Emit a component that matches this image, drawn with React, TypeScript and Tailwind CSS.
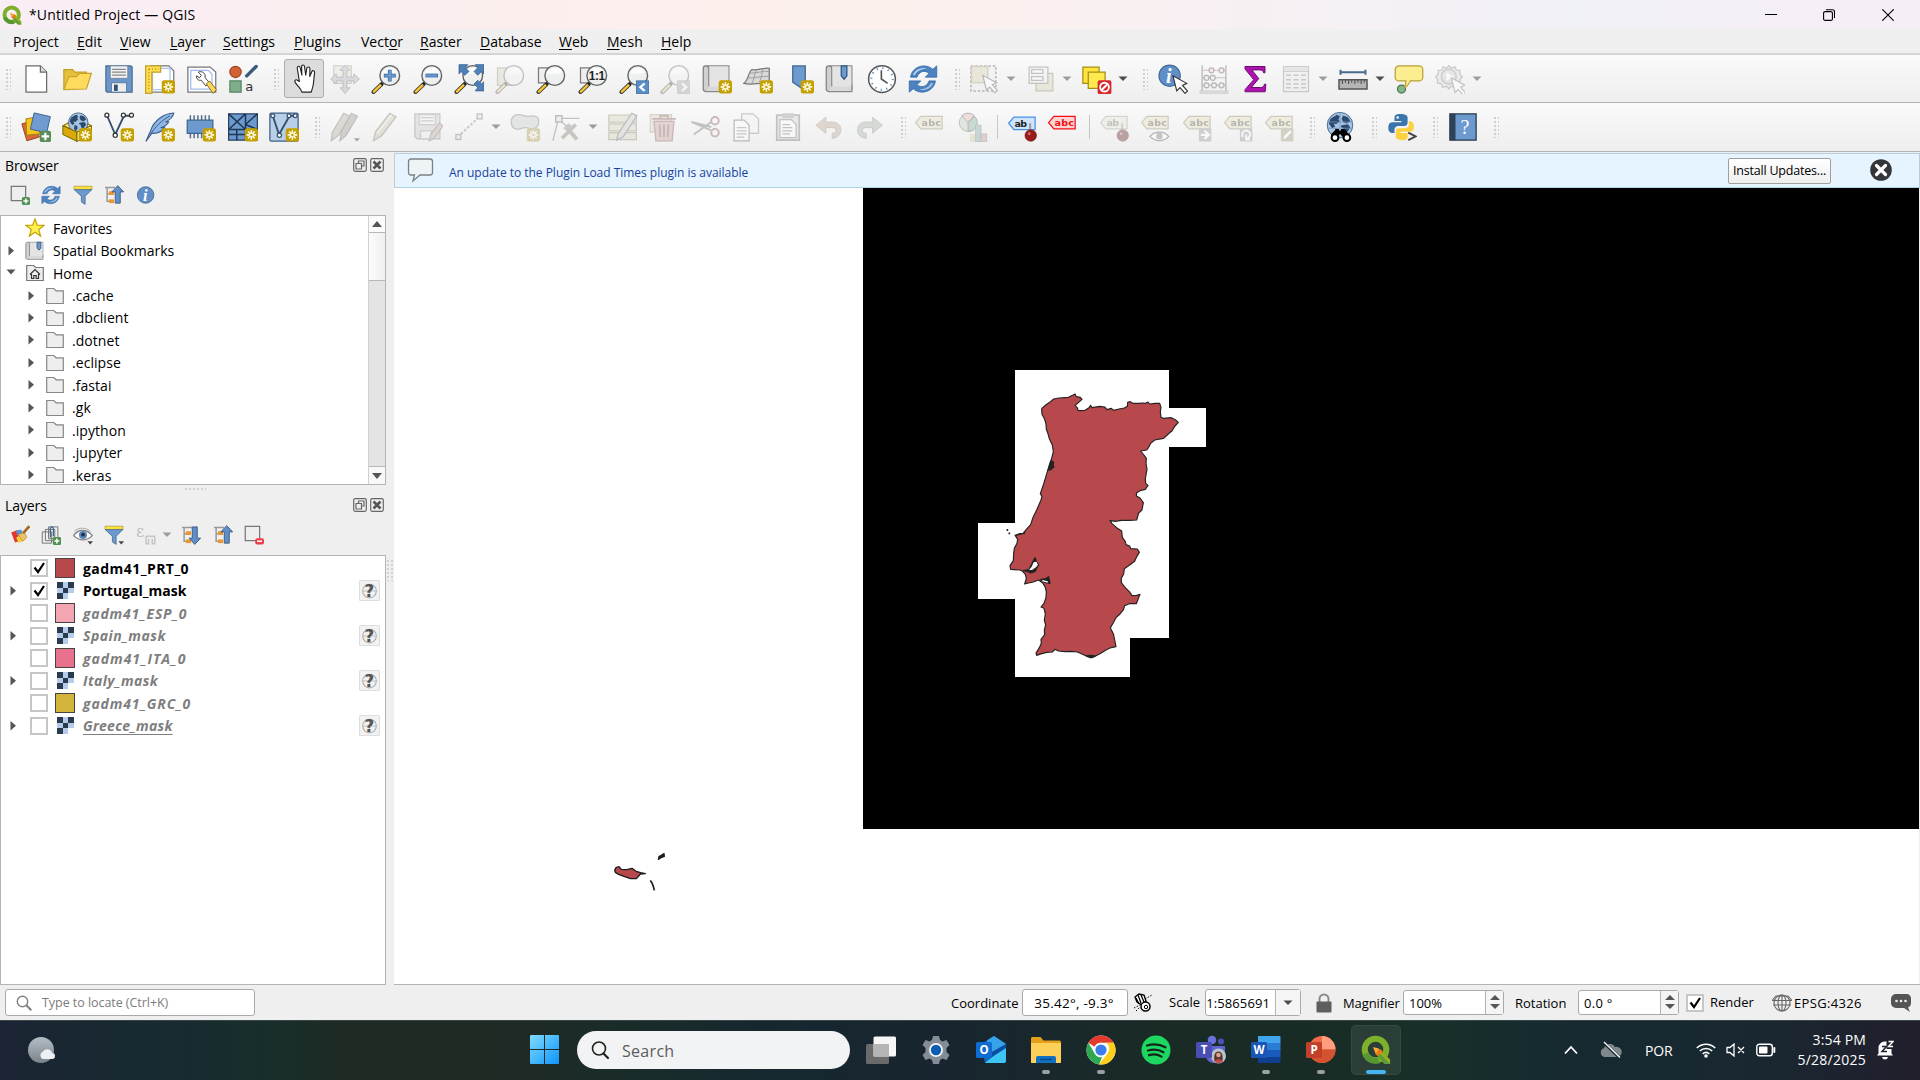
import React from "react";

type P = { children?: React.ReactNode; className?: string };

/* ---------- icon primitives ---------- */

function Ico({ children, className = "" }: P) {
  return (
    <svg viewBox="0 0 24 24" className={`size-[30px] shrink-0 ${className}`} fill="none">
      {children}
    </svg>
  );
}

function Sm({ children, className = "" }: P) {
  return (
    <svg viewBox="0 0 16 16" className={`size-5 shrink-0 ${className}`} fill="none">
      {children}
    </svg>
  );
}

const NewBadge = ({ x = 13.4, y = 13 }: { x?: number; y?: number }) => (
  <g transform={`translate(${x} ${y})`}>
    <rect width="10.6" height="10.6" rx="2" fill="#c4a000" />
    <path d="M5.3 1.5v7.6M1.500 5.3h7.6M2.600 2.600l5.400 5.400M8 2.600L2.600 8" stroke="#fffbe6" strokeWidth="1.3" />
    <circle cx="5.3" cy="5.3" r="1" fill="#c4a000" />
  </g>
);

function Grip({ className = "" }: P) {
  return (
    <div
      className={`h-[22px] w-[6px] shrink-0 bg-[radial-gradient(circle,#c2c2c2_0.6px,transparent_1px)] bg-[length:4px_4px] ${className}`}
    />
  );
}

function Drop({ className = "", dark = false }: { className?: string; dark?: boolean }) {
  return (
    <svg viewBox="0 0 10 6" className={`h-[6px] w-[10px] shrink-0 ${className}`}>
      <path d="M.5.5h9L5 5z" fill={dark ? "#4d4d4d" : "#9d9d9d"} />
    </svg>
  );
}

function Lens({ children }: { children?: React.ReactNode }) {
  return (
    <>
      <path d="M2 22.4l6.4-6.2" stroke="#3c3c3c" strokeWidth="3.2" strokeLinecap="round" />
      <path d="M2.3 22.1l5.4-5.2" stroke="#fcc62f" strokeWidth="1.8" strokeLinecap="round" />
      <path d="M8 16.4l2.4-2.4" stroke="#222" strokeWidth="2.2" />
      <circle cx="15" cy="9.2" r="7.9" fill="#eef0f0" stroke="#5f6364" strokeWidth="1.1" />
      <path d="M9 8a6.4 6.4 0 0 1 12-1.500c-3 2-8 1-12 1.500z" fill="#fff" opacity=".8" />
      {children}
    </>
  );
}

const Tag = ({ fill = "#e9e4c8", stroke = "#a8a48e", color = "#77746a", text = "abc" }) => (
  <>
    <path d="M1.300 10L5.500 5h17v10h-17z" fill={fill} stroke={stroke} strokeWidth="1" />
    <text x="6" y="12.900" fontFamily="DejaVu Sans" fontWeight="700" fontSize="7.600" fill={color} textLength={text === "abc" ? 15.500 : 10}>
      {text}
    </text>
  </>
);

const RefreshArt = () => (
  <>
    <path d="M2 10.500C3 4.500 8 1.500 12.500 1.500c3 0 5.500 1 7.300 2.700L23 1.500v9h-9.200l3-3c-3-2.800-8-2-9.600 3z" fill="#4b82bf" stroke="#2d64a6" strokeWidth=".6" />
    <path d="M22 13.500c-1 6-6 9-10.500 9-3 0-5.500-1-7.300-2.700L1 22.500v-9h9.200l-3 3c3 2.800 8 2 9.600-3z" fill="#4b82bf" stroke="#2d64a6" strokeWidth=".6" />
    <path d="M4 8.500C6 4 11 2.500 15 3.500 10 4 6.500 6 5.500 9z" fill="#b6d1ec" />
    <path d="M20 15.500c-2 4.500-7 6-11 5 5-.5 8.500-2.500 9.500-5.500z" fill="#a3c4e6" />
  </>
);

const Globe = ({ cx = 12, cy = 9, r = 8 }) => (
  <g>
    <circle cx={cx} cy={cy} r={r} fill="#a8c4e2" stroke="#3c5f86" strokeWidth=".7" />
    <g transform={`translate(${cx - r} ${cy - r}) scale(${r / 8})`} fill="#2b4a70">
      <path d="M2 4l4-2.500 2 1-1 2 1 1-2.500 2L4 7l1 2-2 1-2-3zM10 2l3 1 1.500 2.500L12 7l-2-1-1-2zM9 8l4-.500 1.500 2L12 13l-1.500-1L10 10l-1.500-1zM5 10l2 .5.5 2L6 15l-1.500-2z" />
    </g>
  </g>
);

const Cursor = ({ x = 12, y = 9, stroke = "#333" }) => (
  <path
    transform={`translate(${x} ${y})`}
    d="M0 0l3 12 2.600-2.600 4 4.600 2-1.800-4-4.600L11 6z"
    fill="#fff"
    stroke={stroke}
    strokeWidth=".9"
  />
);

const Scroll = () => (
  <>
    <path d="M4 1.500h17.500V20H5V5z" fill="#e2e2e2" stroke="#8a8a8a" />
    <path d="M1 3.500C1 2 2 1.500 3 1.500s2.500.5 2.500 2.500v16c0 1.500-.8 2-2 2s-2.500-.5-2.500-2z" fill="#d0d0d0" stroke="#808080" />
    <path d="M5.500 17H21.500v5H3.500" fill="#d9d9d9" stroke="#8a8a8a" />
    <path d="M6 2h15v16H6z" fill="#e4e4e4" />
  </>
);

const MagBadge = ({ next = false }) => (
  <>
    <rect x="14" y="13.500" width="10" height="10" fill={next ? "#9aa0a5" : "#5c8fc8"} stroke={next ? "#888" : "#3d6ea3"} strokeWidth=".7" />
    <path d={next ? "M17.500 15.500l3.500 3-3.500 3" : "M20.500 15.500l-3.500 3 3.500 3"} stroke="#fff" strokeWidth="1.700" />
  </>
);

const Needle = () => (
  <>
    <path d="M18.500 9v8" stroke="#999" strokeWidth="1.600" />
    <circle cx="19" cy="18.800" r="4.600" fill="#9b1b1b" stroke="#6f1111" strokeWidth=".5" />
    <circle cx="17.800" cy="17.300" r="1.100" fill="#d07474" />
  </>
);

const faded = "opacity-35 saturate-50";

function QgisMark({ className = "" }: P) {
  return (
    <svg viewBox="0 0 32 32" className={className} fill="none">
      <circle cx="15.500" cy="15.500" r="11.500" stroke="#7eb02c" strokeWidth="6.500" />
      <path d="M4.500 20A12 12 0 0 0 19 27" stroke="#589632" strokeWidth="6.500" />
      <path d="M16 15l4.500 1L31 26v5h-6L16.500 20.500z" fill="#93b023" />
      <path d="M19 19l12 12h-6l-7-8.500z" fill="#5b9a35" />
      <path d="M13 13l8 2.500 2 2-5 5-2.500-2z" fill="#ee7913" />
      <path d="M13 13l6 1.500-3 5z" fill="#f5b041" />
    </svg>
  );
}

/* ---------- title and menu ---------- */

function TitleBar() {
  return (
    <header className="flex h-[29px] items-center bg-[linear-gradient(90deg,#f9eef6_0%,#fbeeee_24%,#fcf0ec_45%,#f8f0f2_62%,#f1f1f8_82%,#f6eef6_95%)] pl-[2px]">
      <QgisMark className="size-[20px]" />
      <span className="ml-[7px] text-[14px] tracking-[0.13px]">*Untitled Project — QGIS</span>
      <div className="ml-auto flex items-center pr-[26px]">
        <svg viewBox="0 0 12 12" className="size-3"><path d="M0 5.500h12" stroke="#000" /></svg>
        <svg viewBox="0 0 12 12" className="ml-[46px] size-3" fill="none">
          <rect x=".6" y="2.600" width="8.800" height="8.800" rx="1.500" stroke="#000" strokeWidth="1.100" />
          <path d="M3 .7h6.500a2 2 0 0 1 2 2V9" stroke="#000" strokeWidth="1.100" />
        </svg>
        <svg viewBox="0 0 12 12" className="ml-[47px] size-3"><path d="M.3.3l11.400 11.400M11.700.3L.3 11.700" stroke="#000" strokeWidth="1.100" /></svg>
      </div>
    </header>
  );
}

const menus: [string, string, string, string][] = [
  ["Pro", "j", "ect", "w-[64px]"],
  ["", "E", "dit", "w-[43px]"],
  ["", "V", "iew", "w-[50px]"],
  ["", "L", "ayer", "w-[53px]"],
  ["", "S", "ettings", "w-[71px]"],
  ["", "P", "lugins", "w-[67px]"],
  ["Vect", "o", "r", "w-[59px]"],
  ["", "R", "aster", "w-[60px]"],
  ["", "D", "atabase", "w-[79px]"],
  ["", "W", "eb", "w-[48px]"],
  ["", "M", "esh", "w-[54px]"],
  ["", "H", "elp", "w-[50px]"],
];

function MenuBar() {
  return (
    <nav className="flex h-[26px] items-center border-b-2 border-[#d4d4d4] bg-[#efefef] pl-[13px] text-[14px]">
      {menus.map(([a, u, b, w]) => (
        <span key={a + u + b} className={`shrink-0 whitespace-pre ${w}`}>
          {a}
          <span className="underline underline-offset-2">{u}</span>
          {b}
        </span>
      ))}
    </nav>
  );
}

/* ---------- toolbars ---------- */

const bar = "flex h-12 items-center border-b border-[#b4b4b4] bg-gradient-to-b from-[#fafafa] to-[#eeeeee] pl-[5px]";

function TopToolbar() {
  return (
    <div className={bar}>
      <Grip />
      <div className="ml-[10px] flex w-[237px] justify-between">
        <Ico><path d="M4 1.500h11.500l5 5v16H4z" fill="#fff" stroke="#6b6b6b" /><path d="M15.500 1.500v5h5" fill="#ddd" stroke="#6b6b6b" /></Ico>
        <Ico>
          <path d="M1.500 20.500V4.500h7l1.500 2h9.500v4" fill="#e6c13c" stroke="#c49f25" />
          <path d="M1.500 20.500l4-10.500h6l2.500-2.500h9.500l-4 12.500z" fill="#fcdb5e" stroke="#c9a42b" />
        </Ico>
        <Ico>
          <path d="M1.500 1.500h20l1 1v20h-20l-1-1z" fill="#6b96c7" stroke="#4a6d94" />
          <path d="M5 1.500h14v10H5z" fill="#f1f1f1" stroke="#5d7896" strokeWidth=".6" />
          <path d="M6.500 4.200h11M6.500 6.500h11M6.500 8.800h11" stroke="#888" />
          <path d="M6 15h12v7.500H6z" fill="#eee" stroke="#4a6d94" strokeWidth=".6" />
          <path d="M8 16.500h3v5H8z" fill="#35506e" />
        </Ico>
        <Ico>
          <path d="M4.500 1.500h14.500l4 4v17h-18.500z" fill="#fff" stroke="#777" />
          <path d="M6 3.500h14v17H6z" stroke="#a9c5f1" />
          <path d="M.5 1.500h12v5h-7v17h-5z" fill="#ffdd4f" stroke="#c4a12b" />
          <path d="M3 4v18M3 4h8" stroke="#b28f1c" strokeDasharray="1 1.500" />
          <NewBadge />
        </Ico>
        <Ico>
          <path d="M.7 2.500h17.800l4.500 4v16H.7z" fill="#fff" stroke="#777" />
          <path d="M3 5h14l3 3v12H3z" stroke="#9ebdf0" />
          <path d="M9 6.500c2-1 5 0 5.500 2.500l0 2 3.500 4-3 2.500-3.500-4.500c-2.500.5-4-1-4-3.500l2.500 1.500 1.500-2z" fill="#fff" stroke="#444" strokeWidth=".8" />
          <path d="M15.500 16l2.500-2.500 5.500 7-2.500 3z" fill="#fbd95c" stroke="#866b1d" strokeWidth=".8" />
        </Ico>
        <Ico>
          <circle cx="6" cy="6.300" r="4.500" fill="#d36136" stroke="#a5421c" />
          <path d="M15 9.500L22.500 2" stroke="#3d5a7d" strokeWidth="2.800" strokeLinecap="round" />
          <rect x="1.500" y="13.500" width="9" height="9" fill="#7fae8a" stroke="#598667" />
          <text x="13.800" y="21.600" fontFamily="DejaVu Sans" fontSize="10.500" fill="#333">a</text>
        </Ico>
      </div>
      <Grip className="ml-[15px]" />
      <div className="ml-[5px] flex h-[39px] w-[40px] items-center justify-center rounded-[3px] border border-[#adadad] bg-[#dcdcdc]">
        <Ico>
          <path d="M7.500 14L5.800 3.200c-.2-1.600 2-1.900 2.300-.4L9.500 9 9.300 2c0-1.600 2.200-1.600 2.300 0l1 7 .8-5.500c.2-1.500 2.500-1.400 2.500.2L15.800 10l1.700-4c.5-1.200 2.300-.7 2.200.7l-1 9.100c-.3 3-1.200 4.500-1.700 6.700H9.500c-.5-3-3-4-5.500-8-.7-1.500 1-2.400 2-1.500z" fill="#fff" stroke="#222" strokeWidth=".9" strokeLinejoin="round" transform="translate(.8 0)" />
        </Ico>
      </div>
      <div className="ml-[6px] flex w-[608px] justify-between">
        <Ico className="opacity-40 saturate-50">
          <path d="M3 1.500h14v14H3z" fill="#ebe3c4" stroke="#a49c7f" />
          <path d="M12 1l4 4h-2.500v5.500H19V8l4.500 4-4.500 4v-2.500h-5.500V19H16l-4 4.500L8 19h2.500v-5.500H5V16L.5 12 5 8v2.500h5.500V5H8z" fill="#aeb6bd" stroke="#6d757c" strokeWidth=".8" />
        </Ico>
        <Ico><Lens><path d="M15 4.500v9.500M10.300 9.200h9.500" stroke="#34659c" strokeWidth="3" /><path d="M15 5v8.500M10.800 9.200h8.500" stroke="#6b9bd2" strokeWidth="1.800" /></Lens></Ico>
        <Ico><Lens><path d="M10 9.200h10" stroke="#34659c" strokeWidth="3" /><path d="M10.500 9.200h9" stroke="#6b9bd2" strokeWidth="1.800" /></Lens></Ico>
        <Ico>
          <Lens />
          <path d="M4 .5h7L9 3l3 3-3.500 3-3-3L4 8zM24 .5h-7L19 3l-3 3 3 3 3-3L24 8zM24 21.500h-7L19 19l-3-3 3-3 3 3 2-2z" fill="#4e81b8" stroke="#345e8c" strokeWidth=".6" />
        </Ico>
        <Ico className={faded}><path d="M2 3h14v14H2z" fill="#d9d2a8" stroke="#8d8769" /><Lens /></Ico>
        <Ico><path d="M2 3h12v12H2z" fill="#efefef" stroke="#7b7b7b" /><Lens /></Ico>
        <Ico>
          <path d="M2 3h12v12H2z" fill="#efefef" stroke="#7b7b7b" />
          <Lens><text x="8.600" y="12.600" fontFamily="Liberation Sans" fontWeight="700" fontSize="9.500" fill="#222" textLength="13">1:1</text></Lens>
        </Ico>
        <Ico><Lens /><MagBadge /></Ico>
        <Ico className={faded}><Lens /><MagBadge next /></Ico>
        <Ico><Scroll /><NewBadge /></Ico>
        <Ico>
          <path d="M.7 15.500C4 14 4 7 7 4.500c4 1 11-2 14-1v13c-6-3-12 1-20.300-1z" fill="#d9d9d9" stroke="#777" />
          <path d="M3 11c6 1 12-2 18-1M5 7c5 1 11-2 16-1M11 4c-2 4-2 8-4 12M16 3.500c-1 4-1 8-3 11" stroke="#999" strokeWidth=".7" />
          <NewBadge />
        </Ico>
        <Ico><path d="M7 1.500h10v20l-5-3.500-5-3.500z" fill="#6d9ace" stroke="#3f658f" /><NewBadge /></Ico>
        <Ico><Scroll /><path d="M13 1.500h4.500v8l-2.200 2.700-2.300-2.700z" fill="#6d9ace" stroke="#2c5482" /></Ico>
        <Ico>
          <circle cx="12" cy="12" r="10.700" fill="#fff" stroke="#555" strokeWidth="1.200" />
          <circle cx="12" cy="12" r="8.600" stroke="#5b8fcb" strokeWidth="1.600" strokeDasharray="1 3.500" />
          <path d="M11.500 5v7l5 3.500" stroke="#555" strokeWidth="1.300" />
        </Ico>
        <Ico><RefreshArt /></Ico>
      </div>
      <Grip className="ml-[16px]" />
      <Ico className="ml-[9px] opacity-50">
        <rect x="1.500" y="1.500" width="20" height="20" fill="#f0f0f0" stroke="#777" strokeWidth="1.200" strokeDasharray="2 1.500" />
        <rect x="2" y="2" width="13" height="13" fill="#dfd9bf" stroke="#b2ac92" />
        <Cursor x={11} y={9} stroke="#777" />
      </Ico>
      <Drop className="ml-[7px]" />
      <Ico className="ml-[10px] opacity-45">
        <path d="M8 7.500h13.500v14H8z" fill="#ddd8c0" stroke="#9c9780" />
        <path d="M2.500 2.500h15v13h-15z" fill="#f0f0f0" stroke="#888" />
        <path d="M4.500 4.500h9v3h-9zM4.500 10h9v3h-9z" fill="#fff" stroke="#888" />
      </Ico>
      <Drop className="ml-[6px]" />
      <Ico className="ml-[10px]">
        <path d="M.7 2.500h13v13H.7z" fill="#ffe33e" stroke="#a58f13" />
        <path d="M5 6.500h13.500v13H5z" fill="#ffe94f" stroke="#a58f13" />
        <rect x="12.500" y="13" width="11" height="11" rx="1.500" fill="#d9272b" />
        <circle cx="18" cy="18.500" r="3.500" stroke="#fff" strokeWidth="1.500" /><path d="M15.500 21l5-5" stroke="#fff" strokeWidth="1.500" />
      </Ico>
      <Drop dark className="ml-[6px]" />
      <Grip className="ml-[14px]" />
      <Ico className="ml-[10px]">
        <circle cx="9.300" cy="9.300" r="8.500" fill="#5f8fc6" stroke="#436b99" />
        <text x="6.300" y="15" fontFamily="Liberation Serif" fontStyle="italic" fontWeight="700" fontSize="16" fill="#fff">i</text>
        <Cursor x={12} y={9.500} />
      </Ico>
      <Ico className="ml-[11px] opacity-50">
        <path d="M2.500 1v21M21.500 1v21" stroke="#777" /><path d="M.7 21.500h22.600v2H.7z" fill="#ccc" stroke="#999" strokeWidth=".5" />
        <path d="M2.500 5h19M2.500 11h19M2.500 17h19" stroke="#888" strokeWidth=".7" />
        <g stroke="#8c7272" fill="#eee0e0"><circle cx="10" cy="5" r="2" /><circle cx="18" cy="5" r="2" /></g>
        <g stroke="#777" fill="#eee"><circle cx="6" cy="11" r="2" /><circle cx="11" cy="11" r="2" /><circle cx="6" cy="17" r="2" /><circle cx="12" cy="17" r="2" /><circle cx="18" cy="17" r="2" /></g>
      </Ico>
      <Ico className="ml-[11px]"><path d="M4 2h16v5h-1.200c-.3-1.700-1-2.300-3-2.300H9.500l5.500 7L9 18.800h7.500c2 0 2.600-.8 3-2.600h1.200l-.6 6H4v-1.700l7-8-7-8.500z" fill="#b012b0" stroke="#6c0d73" strokeWidth=".8" /></Ico>
      <Ico className="ml-[11px] opacity-40">
        <path d="M2 2h20v20H2z" fill="#e8ebee" stroke="#888" /><path d="M2 2h20v4H2z" fill="#c9cdd0" stroke="#888" strokeWidth=".6" />
        <path d="M4 9h4M10 9h4M16 9h4M4 12.500h4M10 12.500h4M16 12.500h4M4 16h4M10 16h4M16 16h4M4 19h4M10 19h4M16 19h4" stroke="#888" strokeWidth="1.200" />
      </Ico>
      <Drop className="ml-[7px]" />
      <Ico className="ml-[10px]">
        <path d="M2 6.500h20M2 4.500v4M22 4.500v4" stroke="#4a6a8c" strokeWidth="1.600" />
        <path d="M.8 12.500h22.400v7.500H.8z" fill="#b5b5b5" stroke="#555" strokeWidth="1.200" />
        <path d="M3.500 13v3M6 13v2M8.500 13v3M11 13v2M13.500 13v3M16 13v2M18.500 13v3M21 13v2" stroke="#444" strokeWidth=".8" />
      </Ico>
      <Drop dark className="ml-[7px]" />
      <Ico className="ml-[9px]">
        <circle cx="6" cy="20" r="3.200" fill="#82b78c" stroke="#4b7355" />
        <path d="M4 1.500h16a3 3 0 0 1 3 3v6a3 3 0 0 1-3 3h-7c-1 2.500-2.500 4.500-5.500 6 1.500-2 2-4 2-6H4a3 3 0 0 1-3-3v-6a3 3 0 0 1 3-3z" fill="#fbee8e" stroke="#b8a036" />
      </Ico>
      <Ico className="ml-[11px] opacity-40">
        <path d="M10 1l2 2 3-1 1 2.500 3 .5v3l2 2-2 2v3l-3 .5-1 3-3-1-2 2-2-2-3 1-1-3-3-.5v-3L-.5 10l2-2V5l3-.5 1-2.500 3 1z" transform="translate(1 .3)" fill="#ddd" stroke="#888" />
        <circle cx="11" cy="10" r="6" fill="#c9ced3" stroke="#888" /><path d="M9 6.500l6 3.500-6 3.500z" fill="#fff" />
        <Cursor x={13} y={11} stroke="#777" />
      </Ico>
      <Drop className="ml-[7px]" />
    </div>
  );
}

function EditToolbar() {
  return (
    <div className="flex h-[49px] items-center border-b border-[#b4b4b4] bg-gradient-to-b from-[#fafafa] to-[#eeeeee] pl-[5px]">
      <Grip />
      <div className="ml-[10px] flex w-[278px] justify-between">
        <Ico>
          <path d="M.7 9.500l10-3 4 13.500-10 3z" fill="#d5683b" stroke="#9f4418" strokeWidth=".8" />
          <path d="M4 5.500l11-2v14l-10.500 1z" fill="#f4c61a" stroke="#a5820c" strokeWidth=".8" />
          <path d="M10.500.7l13 3-3 13-13-3z" fill="#6f9bd0" stroke="#3e6592" strokeWidth=".8" />
          <rect x="15" y="15" width="9" height="9" rx="1.500" fill="#5a8c5a" /><path d="M19.500 16.500v6M16.500 19.500h6" stroke="#fff" strokeWidth="1.700" />
        </Ico>
        <Ico>
          <path d="M1 11l5-3h12l5.500 3-11 5z" fill="#f7e46a" stroke="#8e7504" />
          <Globe cx={13} cy={8.500} r={7.800} />
          <path d="M.7 11l11.300 5v7.500L.7 18z" fill="#d9a90a" stroke="#7a6200" strokeWidth=".8" />
          <path d="M12 16l11.500-5v7L12 23.500z" fill="#fff38f" stroke="#7a6200" strokeWidth=".8" />
          <NewBadge />
        </Ico>
        <Ico>
          <path d="M2.500 3l6.500 15L16 3h5" stroke="#34506e" strokeWidth="1.500" />
          <g fill="#fff" stroke="#333" strokeWidth="1"><circle cx="2.300" cy="2.500" r="1.600" /><circle cx="9" cy="18.500" r="1.700" /><circle cx="15.500" cy="2.500" r="1.600" /><circle cx="22" cy="2.500" r="1.600" /></g>
          <NewBadge />
        </Ico>
        <Ico>
          <path d="M23 .8C15 1 7 7 4.500 15l-3.800 8.500L5.500 17c4.500.5 8-1.500 10-4.500h-3c3-.5 5-2 6.500-4.500h-2.500c3-1.500 6-4 6.500-7.200z" fill="#8fb6e4" stroke="#3a5f8c" strokeWidth=".9" />
          <path d="M20 3C13 7 8 12 4 18.500" stroke="#3a5f8c" strokeWidth=".8" />
          <NewBadge />
        </Ico>
        <Ico>
          <path d="M3.500 2.500v4M6.500 2.500v4M9.500 2.500v4M12.500 2.500v4M15.500 2.500v4M18.500 2.500v4M3.500 17v4M6.500 17v4M9.500 17v4M12.500 17v4" stroke="#52708f" strokeWidth="1.200" />
          <path d="M1 6.500h20.500v10.500H1z" fill="#6d9ace" stroke="#3f658f" /><NewBadge />
        </Ico>
        <Ico>
          <path d="M.5 1.500h23v21H.5z" fill="#6d9ace" stroke="#24405f" />
          <path d="M.5 14h23M14 1.500V22.500M.5 1.500l13.500 12.500M14 1.500L.5 14M14 10l9.500-8.500M14 10l9.500 4M.5 18h13.500M7 14v8.500" stroke="#1e3753" strokeWidth="1.200" />
          <NewBadge />
        </Ico>
        <Ico>
          <rect x=".7" y=".9" width="22.600" height="22.300" rx="1" fill="#b9cfe8" stroke="#3f5f82" />
          <path d="M3 3l5 15L16.500 3H21" stroke="#34506e" strokeWidth="1.500" />
          <g fill="#fff" stroke="#34506e"><circle cx="3" cy="3" r="1.500" /><circle cx="8.300" cy="18.500" r="1.700" /><circle cx="16" cy="3" r="1.500" /><circle cx="21" cy="3" r="1.500" /></g>
          <NewBadge />
        </Ico>
      </div>
      <Grip className="ml-[15px]" />
      <Ico className="ml-[10px] opacity-40">
        <path d="M1 23l1-7L11 1l5 2.500-9 15z" fill="#b9b2a6" stroke="#7d776c" /><path d="M8 23l1-7L17 1l5 2.500-9 15z" fill="#a39a93" stroke="#77706a" />
        <path d="M19 21h5l-2.500 2.500z" fill="#333" />
      </Ico>
      <Ico className="ml-[11px] opacity-40"><path d="M2 23l1.500-7L15 1l5 3-11.500 15z" fill="#cbc6ae" stroke="#7d7a6c" /><path d="M5 17L16.500 2.500" stroke="#f2f0e4" /></Ico>
      <Ico className="ml-[12px] opacity-35">
        <path d="M1.500 1.500h20v20h-18l-2-2z" fill="#c4c6c8" stroke="#777" /><path d="M5 2h13v8H5z" fill="#eee" stroke="#888" /><path d="M6.500 4.500h10M6.500 7h10" stroke="#888" /><path d="M6 15h9v6.500H6z" fill="#eee" stroke="#888" />
        <path d="M13 23l1-5 7-9 3 2-7 10z" fill="#b59f97" stroke="#77635c" />
      </Ico>
      <Ico className="ml-[11px] opacity-40">
        <path d="M3 20L20 4" stroke="#888" strokeWidth="1.500" strokeDasharray="2 1.500" /><rect x="1.500" y="18" width="4" height="4" fill="#ddd" stroke="#777" /><rect x="18.500" y="1.500" width="4" height="4" fill="#ddd" stroke="#777" />
      </Ico>
      <Drop className="ml-[7px]" />
      <Ico className="ml-[9px] opacity-40">
        <path d="M1 8c0-4 2.500-6 6-6 4 0 4 2 8 1.500 5-1 8 0 8 4 0 5-4 7-8 5.500-3-1-4-.5-7 .5-4 1-7-1-7-5.500z" fill="#c9cfcd" stroke="#7c8280" /><g className="saturate-50"><NewBadge /></g>
      </Ico>
      <Ico className="ml-[12px] opacity-40">
        <path d="M5 6L.7 23M5 5h17M7 7l12 12" stroke="#777" /><rect x="3" y="3" width="5" height="5" fill="#e4e4e4" stroke="#555" />
        <path d="M8 21L19 10M20 22l-9-10" stroke="#8a8474" strokeWidth="3" /><path d="M9 13l4-4 3 2-4 4z" fill="#888" />
      </Ico>
      <Drop className="ml-[6px]" />
      <div className="ml-[10px] flex w-[277px] justify-between">
        <Ico className="opacity-40"><path d="M.7 2.500h22V8H.7zM.7 9.500h22V15H.7zM.7 16.500h22V22H.7z" fill="#dcd8bc" stroke="#918d74" /><path d="M7 22.500l1-5L19 1l4 2-11 17z" fill="#ccc" stroke="#666" /></Ico>
        <Ico className="opacity-40"><path d="M1 2h17v14H1z" fill="#dcd8bc" stroke="#a8a48c" /><path d="M4 7.500h16l-1.500 15.500h-13z" fill="#caa2a2" stroke="#8b5c5c" /><path d="M2.500 5.500h19M9 5V3h6v2M8.500 10l.5 10M12 10v10M15.500 10L15 20" stroke="#8b5c5c" strokeWidth="1.500" /></Ico>
        <Ico className="opacity-40"><path d="M1 8l15.500 6.500M3 18L17 8M1 8l16 4" stroke="#777" strokeWidth="1.500" /><circle cx="20" cy="7" r="3" stroke="#8b5c5c" strokeWidth="1.500" /><circle cx="20" cy="16.500" r="3" stroke="#8b5c5c" strokeWidth="1.500" /></Ico>
        <Ico className="opacity-35"><path d="M8.500 1.500h9l4.500 4V17H8.500z" fill="#f4f4f4" stroke="#777" /><path d="M2.500 6.500h8l4 4v12.500h-12z" fill="#fff" stroke="#555" /><path d="M4.500 12.500h8M4.500 15h8M4.500 17.500h8M4.500 20h6" stroke="#777" /></Ico>
        <Ico className="opacity-40"><path d="M3 2.500h18v20H3z" fill="#d6d6d0" stroke="#777" strokeWidth="1.400" /><path d="M7.500 1h9v4h-9z" fill="#999" /><path d="M5.500 6h9l4 4v10.500h-13z" fill="#fff" stroke="#777" /><path d="M7.500 10h6M7.500 12.500h8M7.500 15h8M7.500 17.500h6" stroke="#777" /></Ico>
        <Ico className="opacity-40"><path d="M1.500 10.500L9.500 4v4h5c5 0 7 3 7 6.500s-3 6.500-7 6.500v-4c2 0 3-1 3-2.300s-1-2.200-3-2.200h-5V17z" fill="#bba898" stroke="#94816f" strokeWidth=".6" /></Ico>
        <Ico className="opacity-40"><path d="M22 10.500L14 4v4H9c-5 0-7 3-7 6.500S5 21 9 21v-4c-2 0-3-1-3-2.300s1-2.200 3-2.200h5V17z" fill="#a9b3ab" stroke="#7c877f" strokeWidth=".6" /></Ico>
      </div>
      <Grip className="ml-[15px]" />
      <Ico className="ml-[8px] opacity-50"><g transform="translate(0 -1.500)"><Tag /></g></Ico>
      <Ico className="ml-[14px] opacity-50">
        <circle cx="8" cy="8.500" r="7" fill="#cfd8d0" stroke="#888" strokeWidth=".8" /><path d="M8 8.500L3 3a7 7 0 0 1 10 0z" fill="#e6c7c0" stroke="#777" strokeWidth=".8" /><path d="M8 8.500L13.200 3.500a7 7 0 0 1-5 12z" fill="#9fc3ae" stroke="#777" strokeWidth=".8" />
        <path d="M9.500 17.500h4.500V24H9.500z" fill="#ded7b5" /><path d="M14 10.500h4.500V24H14z" fill="#a0b6b6" stroke="#789" strokeWidth=".5" /><path d="M18.500 17.500H23V24h-4.500z" fill="#c8aeb0" stroke="#977" strokeWidth=".5" />
      </Ico>
      <div className="ml-[9px] h-6 w-px bg-[#c6c6c6]" />
      <Ico className="ml-[9px]"><g transform="translate(0 -1)"><Tag text="ab" fill="#cfe3fb" stroke="#4a92e8" color="#222" /></g><Needle /></Ico>
      <Ico className="ml-[10px]"><g transform="translate(0 -1.500)"><Tag fill="#fbd3d3" stroke="#f01212" color="#ee1010" /></g></Ico>
      <div className="ml-[12px] h-6 w-px bg-[#c6c6c6]" />
      <div className="ml-[9px] flex w-[195px] justify-between">
        <Ico className="opacity-40 saturate-50"><g transform="translate(0 -1.500)"><Tag text="ab" /></g><Needle /></Ico>
        <Ico className="opacity-50"><g transform="translate(0 -1.500)"><Tag /></g><path d="M8 19.500c4-4.500 11-4.500 15 0-4 4.500-11 4.500-15 0z" fill="#fff" stroke="#777" /><circle cx="15.500" cy="19.300" r="2.600" fill="#999" /></Ico>
        <Ico className="opacity-50"><g transform="translate(0 -1.500)"><Tag /></g><rect x="13.500" y="13" width="10" height="10.500" rx="1" fill="#a9adb0" /><path d="M15 18.200h6M18 15l3.500 3.200L18 21.500" stroke="#fff" strokeWidth="1.800" /></Ico>
        <Ico className="opacity-50"><g transform="translate(0 -1.500)"><Tag /></g><rect x="13.500" y="13" width="10" height="10.500" rx="1" fill="#a9adb0" /><path d="M16 20a3.200 3.200 0 1 1 3 1.200M18.500 18v4h3" stroke="#fff" strokeWidth="1.500" /></Ico>
        <Ico className="opacity-50"><g transform="translate(0 -1.500)"><Tag /></g><rect x="13.500" y="13" width="10" height="10.500" rx="1" fill="#b5b09a" /><path d="M15.500 21.500l.7-2.500 4.800-4.500 1.200 1.300-4.500 5z" fill="#fff" /></Ico>
      </div>
      <Grip className="ml-[15px]" />
      <Ico className="ml-[10px]">
        <Globe cx={12} cy={10.500} r={10.200} />
        <path d="M2 8h20M2 13h20M12 0v13" stroke="#6f93bb" strokeWidth=".6" />
        <path d="M9 13.500h2l1 2 1-2h2.500l3.500 4v3h-4l-3-3-3 3H5v-3z" fill="#000" />
        <circle cx="8" cy="20.500" r="2.700" fill="#fff" stroke="#000" strokeWidth="1.600" /><circle cx="17.500" cy="20.500" r="2.700" fill="#fff" stroke="#000" strokeWidth="1.600" />
      </Ico>
      <Grip className="ml-[16px]" />
      <Ico className="ml-[10px]">
        <path d="M10.500 1.500c-4 0-4.500 1.500-4.500 3v2.700h5.500v1H4C2 8.200 1 10 1 12.500s1 4.200 3 4.200h2v-2.600c0-2 1.500-3 3-3h5c1.500 0 2.500-1 2.500-2.500v-4c0-2-2-3.100-6-3.100z" fill="#3a76ad" />
        <path d="M12 22.500c4 0 4.500-1.500 4.500-3v-2.700H11v-1h7.500c2 0 3-1.800 3-4.300s-1-4.200-3-4.200h-1v2.600c0 2-1.500 3-3 3h-5c-1.500 0-2.500 1-2.500 2.500v4c0 2 2 3.100 5 3.100z" fill="#fdd140" />
        <circle cx="8.500" cy="4.300" r="1" fill="#fff" />
        <path d="M17 16.500l6 3-6 3" stroke="#444" strokeWidth="1.500" />
      </Ico>
      <Grip className="ml-[15px]" />
      <Ico className="ml-[10px]">
        <path d="M1.500 1.500h21v21h-21z" fill="#6d9ace" stroke="#26374a" /><path d="M1.500 1.500h4.500v21H1.500z" fill="#2d4259" />
        <text x="10" y="17.500" fontFamily="Liberation Serif" fontSize="16" fill="#fff">?</text>
      </Ico>
      <Grip className="ml-[15px]" />
    </div>
  );
}

/* ---------- docks ---------- */

const InfoIcon = () => (
  <Sm><circle cx="7.700" cy="8" r="6.600" fill="#5f8fc6" stroke="#436b99" strokeWidth=".7" /><text x="5.500" y="12.500" fontFamily="Liberation Serif" fontStyle="italic" fontWeight="700" fontSize="13" fill="#fff">i</text></Sm>
);
const FunnelIcon = ({ menu = false }) => (
  <Sm><path d="M.8 1h14.400v2.500H.8z" fill="#ffe53b" stroke="#9a8b2c" strokeWidth=".5" /><path d="M1 3.700h14L9.700 9v6.500l-3-2V9z" fill="#6d9ace" stroke="#3f658f" strokeWidth=".6" />{menu && <path d="M11.500 13H16l-2.200 2.500z" fill="#444" />}</Sm>
);
const TreeArrow = ({ down = false }) => (
  <Sm>
    <path d="M.8 2h8M2.500 2v11.500M2.500 7H5M2.500 13H5" stroke="#999" strokeWidth="1.200" />
    <rect x="4" y="5" width="4" height="3" fill="#f0952b" /><rect x="4" y="11.500" width="4" height="3" fill="#f0952b" />
    <path d={down ? "M11 15.500L6.500 10.500H9V1.500h4v9h2.700z" : "M11 .5l4.700 5H13v9H9v-9H6.300z"} fill="#5f8fc6" stroke="#33567f" strokeWidth=".7" />
  </Sm>
);

function DockTitle({ title }: { title: string }) {
  return (
    <div className="flex h-[26px] shrink-0 items-center pr-[2px] pl-[5px] text-[14px] tracking-[-0.1px]">
      {title}
      <svg viewBox="0 0 14 14" className="ml-auto size-[14px]" fill="none">
        <rect x=".7" y=".7" width="12.600" height="12.600" rx="1.500" stroke="#666" strokeWidth="1.200" />
        <path d="M5.500 5V3h5.500v5H9M3 5.500h5.500V11H3z" stroke="#666" strokeWidth="1.200" />
      </svg>
      <svg viewBox="0 0 14 14" className="ml-[3px] size-[14px]" fill="none">
        <rect x=".7" y=".7" width="12.600" height="12.600" rx="1.500" stroke="#666" strokeWidth="1.200" />
        <path d="M3.500 3.500l7 7M10.500 3.500l-7 7" stroke="#555" strokeWidth="2.600" />
      </svg>
    </div>
  );
}

function Arrow({ open = false, hidden = false }) {
  return (
    <svg viewBox="0 0 10 10" className={`size-[10px] shrink-0 ${hidden ? "invisible" : ""}`}>
      <path d={open ? "M.5 1.500h9L5 6.500z" : "M2.500 0v9.500L8 4.700z"} fill="#555" />
    </svg>
  );
}

const folders = [".cache", ".dbclient", ".dotnet", ".eclipse", ".fastai", ".gk", ".ipython", ".jupyter", ".keras"];
const rowCls = "flex h-[22.45px] shrink-0 items-center";

function BrowserDock() {
  return (
    <section className="flex h-[333px] shrink-0 flex-col">
      <DockTitle title="Browser" />
      <div className="flex h-[37px] shrink-0 items-center gap-[11.400px] pb-[3px] pl-[10px]">
        <Sm><path d="M1 1h11.500v11.500H1z" fill="#eee" stroke="#777" /><rect x="9.500" y="9.500" width="6.500" height="6.500" rx="1.500" fill="#4f9150" /><path d="M12.700 10.700v4M10.700 12.700h4" stroke="#fff" strokeWidth="1.200" /></Sm>
        <Sm><g transform="scale(.667)"><RefreshArt /></g></Sm>
        <FunnelIcon />
        <TreeArrow />
        <InfoIcon />
      </div>
      <div className="flex min-h-0 flex-1 border border-[#b4b4b4] bg-white text-[14px]">
        <div className="flex-1 overflow-hidden pt-px">
          <div className={rowCls}>
            <svg viewBox="0 0 20 20" className="ml-[24px] size-5"><path d="M10 1l2.300 6.200 6.700.2-5.300 4 1.900 6.600-5.600-3.800L4.400 18l1.900-6.600L1 7.400l6.700-.2z" fill="#fff04f" stroke="#c5a200" strokeWidth="1.200" /></svg>
            <span className="ml-[8px]">Favorites</span>
          </div>
          <div className={rowCls}>
            <span className="ml-[5px] flex"><Arrow /></span>
            <svg viewBox="0 0 24 24" className="ml-[9px] size-[20px]" fill="none"><Scroll /><path d="M14.500 1.500H19v7l-2.200 2.500L14.500 8.500z" fill="#6d9ace" stroke="#2c5482" /></svg>
            <span className="ml-[8px]">Spatial Bookmarks</span>
          </div>
          <div className={rowCls}>
            <span className="ml-[5px] flex"><Arrow open /></span>
            <svg viewBox="0 0 18 18" className="ml-[10px] size-[18px]" fill="none"><path d="M.7 1.500h7l2 2h7.600v13H.7z" fill="#eee" stroke="#777" strokeWidth="1.200" /><path d="M4 10.500l5-5 5 5M5.500 10v4.500h2.300v-3h2.400v3h2.300V10" stroke="#333" strokeWidth="1.200" /></svg>
            <span className="ml-[9px]">Home</span>
          </div>
          {folders.map((f) => (
            <div key={f} className={rowCls}>
              <span className="ml-[25px] flex"><Arrow /></span>
              <svg viewBox="0 0 18 18" className="ml-[10px] size-[18px]" fill="none"><path d="M.7 1.500h7l2.500 2.300h7.100v12.700H.7z" fill="#eee" stroke="#868884" strokeWidth="1.200" /></svg>
              <span className="ml-[8px] tracking-[0.05px]">{f}</span>
            </div>
          ))}
        </div>
        <div className="flex w-[17px] flex-col border-l border-[#d0d0d0] bg-[#e4e4e4]">
          <div className="flex h-[17px] items-center justify-center border-b border-[#b8b8b8] bg-[#fbfbfb]"><svg viewBox="0 0 10 6" className="h-[6px] w-[10px]"><path d="M0 6h10L5 0z" fill="#555" /></svg></div>
          <div className="h-[48px] border-b border-[#b8b8b8] bg-gradient-to-r from-[#fbfbfb] to-[#f0f0f0]" />
          <div className="mt-auto flex h-[18px] items-center justify-center border-t border-[#b8b8b8] bg-[#f8f8f8]"><svg viewBox="0 0 10 6" className="h-[6px] w-[10px]"><path d="M0 0h10L5 6z" fill="#555" /></svg></div>
        </div>
      </div>
    </section>
  );
}

const layers = [
  { name: "gadm41_PRT_0", on: true, sw: "bg-[#b7484b]", track: "tracking-[0.45px]" },
  { name: "Portugal_mask", on: true, track: "tracking-[0px]" },
  { name: "gadm41_ESP_0", sw: "bg-[#f3a6b2]", track: "tracking-[0.8px]" },
  { name: "Spain_mask", track: "tracking-[0.5px]" },
  { name: "gadm41_ITA_0", sw: "bg-[#e8718d]", track: "tracking-[0.95px]" },
  { name: "Italy_mask", track: "tracking-[0.4px]" },
  { name: "gadm41_GRC_0", sw: "bg-[#d2b33c]", track: "tracking-[0.85px]" },
  { name: "Greece_mask", current: true, track: "tracking-[0.25px]" },
];

const Check = ({ on = false }) => (
  <span className="flex size-[18px] shrink-0 items-center justify-center border-2 border-[#c6c6c6] bg-white">
    {on && <svg viewBox="0 0 12 12" className="size-3"><path d="M1.500 5.500L5 10 11 1" stroke="#000" strokeWidth="2.200" fill="none" /></svg>}
  </span>
);

function LayersDock() {
  return (
    <section className="flex min-h-0 flex-1 flex-col">
      <DockTitle title="Layers" />
      <div className="flex h-[37px] shrink-0 items-center pb-[3px] pl-[10px]">
        <Sm>
          <path d="M1 6l5-2 4 8-6 2z" fill="#e2372c" /><path d="M4.500 4.500L9 3.500l3 7-4 2z" fill="#5b93d4" /><path d="M5 10l5-3 2 5-5 2.500z" fill="#fbd23c" />
          <path d="M6.500 7.500l5-1.500 2 4-3.500 3z" fill="#eec26a" stroke="#a97c28" strokeWidth=".5" /><path d="M10.500 6.500L15.500 1" stroke="#a26a22" strokeWidth="2.200" />
        </Sm>
        <Sm className="ml-[11px]"><path d="M1 5.500h7.500v9H1zM3.500 3.500H11v9H3.500zM6 1.500h7.500v9.500H6z" fill="#eee" fillOpacity=".6" stroke="#777" strokeWidth=".8" /><path d="M7.500 10V2.500q1.200-2 2.400 0V9" stroke="#3e6592" /><rect x="9.500" y="9.500" width="6.500" height="6.500" rx="1" fill="#4f9150" /><path d="M12.700 10.700v4M10.700 12.700h4" stroke="#fff" strokeWidth="1.200" /></Sm>
        <Sm className="ml-[12px]"><path d="M.5 8.500C4 3 11 3 15.500 8.500 11 13 5 13 .5 8.500z" fill="#fff" stroke="#888" strokeWidth="1.100" /><path d="M1 5C5 1.500 10 2 14 5" stroke="#aaa" strokeWidth=".8" /><circle cx="8" cy="8" r="3.200" fill="#5b87b9" /><circle cx="8" cy="7.700" r="1.500" fill="#1d2f44" /><path d="M11.500 13H16l-2.200 2.500z" fill="#444" /></Sm>
        <span className="ml-[11px] flex"><FunnelIcon menu /></span>
        <Sm className="ml-[12px] opacity-40"><text x="0" y="9.500" fontFamily="DejaVu Serif" fontSize="13" fill="#777">ε</text><path d="M8 9h7v6h-2v-4M8 9v6h2v-4" stroke="#888" strokeWidth="1.200" /></Sm>
        <Drop className="ml-[6px]" />
        <span className="ml-[9px] flex"><TreeArrow down /></span>
        <span className="ml-[12px] flex"><TreeArrow /></span>
        <Sm className="ml-[11px]"><path d="M1 1h11.500v11.500H1z" fill="#eee" stroke="#777" /><rect x="9" y="10.500" width="7" height="5" rx="1.500" fill="#ea3f49" /><path d="M10.500 13h4" stroke="#fff" strokeWidth="1.300" /></Sm>
      </div>
      <div className="flex-1 border border-[#b4b4b4] bg-white pt-px">
        {layers.map((l) => (
          <div key={l.name} className="flex h-[22.500px] items-center pr-[5px] pl-[7px]">
            <Arrow hidden={!!l.sw} />
            <span className="ml-[12px] flex"><Check on={l.on} /></span>
            {l.sw ? (
              <span className={`ml-[7px] size-5 shrink-0 border border-[#444] ${l.sw}`} />
            ) : (
              <svg viewBox="0 0 9 9" className="ml-[9px] size-[17px]" shapeRendering="crispEdges">
                <path d="M0 0h9v6H6v3H0z" fill="#b5cdea" />
                <path d="M0 0h3v3H0zM6 0h3v3H6zM3 3h3v3H3zM0 6h3v3H0z" fill="#2b3b4f" />
              </svg>
            )}
            <span
              className={`${l.sw ? "ml-[8px]" : "ml-[9px]"} text-[14px] font-bold ${l.track} ${l.on ? "text-black" : "text-[#7e7e7e] italic"} ${l.current ? "underline underline-offset-3" : ""}`}
            >
              {l.name}
            </span>
            {!l.sw && (
              <svg viewBox="0 0 20 20" className="ml-auto size-[21px]" fill="none">
                <rect x=".5" y=".5" width="19" height="19" rx="1" fill="#f2f2f2" stroke="#ddd" />
                <circle cx="10" cy="10.500" r="6.500" stroke="#aaa" /><path d="M3 10.500h14M10 4v13" stroke="#bbb" />
                <text x="5.300" y="16" fontFamily="DejaVu Sans" fontWeight="700" fontSize="16" fill="#555">?</text>
              </svg>
            )}
          </div>
        ))}
      </div>
    </section>
  );
}

/* ---------- canvas ---------- */

const mainland =
  "M245 146L257 135 269 127 281 117 297 114 325 112 338 106 345 102 349 110 361 112 366 118 356 127 345 137 351 142 355 152 375 151 387 143 392 136 396 143 420 139 434 141 441 149 454 145 461 151 477 147 493 144 502 139 503 127 511 125 518 130 536 130 548 129 556 130 564 126 569 132 585 130 599 130 603 142 601 156 603 172 610 175 634 173 646 179 655 187 645 198 635 214 628 219 611 235 584 240 572 250 566 262 560 270 542 273 552 285 559 295 558 310 561 328 558 345 556 356 557 370 564 376 556 388 543 391 530 398 529 408 540 414 550 428 546 450 536 459 530 480 510 481 485 481 465 484 450 481 456 491 470 503 485 513 487 532 496 545 498 554 509 558 512 566 532 567 538 577 530 590 524 604 508 616 493 626 491 642 484 655 484 668 495 682 508 695 516 707 530 706 540 703 535 716 529 731 508 731 494 737 490 750 480 762 468 773 460 788 451 804 460 821 464 840 468 860 450 864 438 870 420 881 405 889 393 893 380 889 366 882 352 876 335 874 315 875 295 873 285 868 277 876 260 877 245 881 230 886 228 879 238 863 244 850 243 838 254 824 253 810 257 795 253 780 256 762 252 745 243 741 252 730 258 712 259 695 255 680 248 669 236 660 220 666 206 669 194 672 199 655 196 643 188 634 180 630 152 628 150 617 160 602 161 580 163 565 171 550 173 538 166 527 178 521 190 520 199 508 212 494 218 475 231 448 243 420 246 409 241 401 251 372 262 335 269 312 275 295 280 275 277 255 268 236 263 218 259 208 258 192 254 178 246 163Z";

function MapCanvas() {
  return (
    <svg viewBox="394 188 1525 796" className="block h-[796px] w-[1525px]" fill="none">
      <rect x="394" y="188" width="1525" height="796" fill="#fff" />
      <rect x="863" y="188" width="1056" height="641" fill="#000" />
      <path d="M1015 370h154v38h37v39h-37v191h-39v39h-115v-78h-37v-76h37z" fill="#fff" />
      <g transform="translate(960 360) scale(.33333)" stroke="#232323" strokeWidth="3.500" strokeLinejoin="round">
        <path fill="#b7484b" d={mainland} />
        <path d="M164 526l10-2 16-4M193 514v9" />
        <path d="M190 632L206 629 214 615 222 598 226 593 229 606 236 614 231 622 226 634 212 639 202 634Z" fill="#232323" />
        <path d="M207 630l8-10 6-13 8-2 5 9-6 8-12 8z" fill="#fff" stroke="none" />
        <path d="M273 302l8 4-2 10 3 4-8 8-10 3 4-12z" fill="#232323" />
        <path d="M242 659l14-3 10-6 4 20-16-3z" fill="#232323" />
        <path d="M247 662l16 4" stroke="#fff" strokeWidth="4" />
        <path d="M141 509h2v2h-2zM147 519h2v2h-2z" />
        <path d="M380 887l14 6 12-5-10-2z" fill="#232323" />
      </g>
      <g transform="translate(590 830) scale(.33333)" stroke="#1c1c1c" strokeWidth="4" strokeLinejoin="round">
        <path d="M74 121L78 113 87 110 94 118 110 119 126 115 138 124 152 128 166 131 151 132 146 138 139 146 122 146 104 140 86 133 76 127Z" fill="#b7484b" />
        <path d="M205 88L207 80 214 76 222 71 223 79 213 83Z" fill="#1c1c1c" />
        <path d="M181 151l5 8 4 10 3 12" strokeWidth="5" />
      </g>
    </svg>
  );
}

function MessageBar() {
  return (
    <div className="flex h-[35px] w-[1526px] items-center border border-[#b5cfe2] bg-[#e5f4fe] pl-[12px]">
      <svg viewBox="0 0 28 26" className="-mt-[2px] h-[26px] w-[28px]" fill="none">
        <path d="M4 2h19c1.500 0 2.500 1 2.500 2.500v11c0 1.500-1 2.500-2.500 2.500H13l-7 6 1.500-6H4c-1.500 0-2.500-1-2.500-2.500v-11C1.500 3 2.500 2 4 2z" fill="#eef3f6" stroke="#7b8084" strokeWidth="1.300" />
      </svg>
      <span className="ml-[14px] pt-[4px] text-[12px] tracking-[-0.02px] text-[#1a3e9c]">An update to the Plugin Load Times plugin is available</span>
      <span className="ml-auto flex h-[26px] w-[103px] shrink-0 items-center justify-center rounded-[2px] border border-[#9f9f9f] bg-gradient-to-b from-white to-[#eee] pt-px text-[12.500px] tracking-[-0.2px]">Install Updates...</span>
      <svg viewBox="0 0 22 22" className="-mt-px mr-[27px] ml-[39px] size-[22px]"><circle cx="11" cy="11" r="10.800" fill="#33373a" /><path d="M6.500 6.500l9 9M15.500 6.500l-9 9" stroke="#fff" strokeWidth="3.200" strokeLinecap="round" /></svg>
    </div>
  );
}

/* ---------- status bar ---------- */

const box = "flex shrink-0 items-center rounded-[3px] border border-[#a9a9a9] bg-white";

function Spin() {
  return (
    <span className="ml-auto flex h-full w-[18px] flex-col items-center justify-center gap-[4px] border-l border-[#b4b4b4] bg-[#f5f5f5]">
      <svg viewBox="0 0 10 5" className="h-[5px] w-[10px]"><path d="M0 5h10L5 0z" fill="#555" /></svg>
      <svg viewBox="0 0 10 5" className="h-[5px] w-[10px]"><path d="M0 0h10L5 5z" fill="#555" /></svg>
    </span>
  );
}

function StatusBar() {
  return (
    <div className="flex h-[35px] items-center bg-[#efefef] pl-[5px] text-[13px] whitespace-nowrap">
      <div className={`${box} h-[27px] w-[250px] pl-[10px]`}>
        <svg viewBox="0 0 16 16" className="size-4" fill="none"><circle cx="6.500" cy="6.500" r="5.200" stroke="#808080" strokeWidth="1.400" /><path d="M10.300 10.300l5 5" stroke="#808080" strokeWidth="2" /></svg>
        <span className="ml-[10px] pt-[2px] text-[12.500px] tracking-[-0.05px] text-[#7c7c7c]">Type to locate (Ctrl+K)</span>
      </div>
      <span className="ml-[696px] w-[71px] shrink-0 pt-[2px]">Coordinate</span>
      <div className={`${box} h-[27px] w-[106px] justify-center pt-[2px] pr-[2px] text-[13.500px] tracking-[0.25px]`}>35.42°, -9.3°</div>
      <svg viewBox="0 0 20 20" className="ml-[5px] size-5 shrink-0" fill="none">
        <path d="M2 4l4-3 5 1 2 6-4 4-5-3z" fill="#fff" stroke="#000" strokeWidth="1.400" /><path d="M5 2l3 8M8 2l3 7M3 5l3 6" stroke="#000" strokeWidth="1.300" />
        <circle cx="12.500" cy="13.500" r="4.500" fill="#fff" stroke="#000" strokeWidth="1.500" /><circle cx="13" cy="14" r="1.700" stroke="#000" />
        <path d="M12 6l7-4M1 15l6-3M3 18l4-4" stroke="#000" strokeDasharray="1.500 1.500" />
      </svg>
      <span className="ml-[16px] w-[36px] shrink-0 pt-px">Scale</span>
      <div className={`${box} h-[27px] w-[96px]`}>
        <span className="flex w-[69px] justify-end pt-[2px] pr-[5px] tracking-[0.1px]">1:5865691</span>
        <span className="flex h-full flex-1 items-center justify-center border-l border-[#b4b4b4] bg-[#f5f5f5]"><Drop dark /></span>
      </div>
      <svg viewBox="0 0 16 20" className="ml-[15px] h-5 w-4 shrink-0" fill="none"><path d="M3.500 9V6a4.500 4.500 0 0 1 9 0v3" stroke="#8a8a8a" strokeWidth="2" /><rect x=".5" y="8.500" width="15" height="11" rx="1" fill="#5e5e5e" /></svg>
      <span className="ml-[11px] w-[60px] shrink-0 pt-[2px] tracking-[-0.1px]">Magnifier</span>
      <div className={`${box} -mt-px h-[25px] w-[101px] pl-[5px]`}><span className="pt-[3px]">100%</span><Spin /></div>
      <span className="ml-[11px] w-[63px] shrink-0 pt-[2px]">Rotation</span>
      <div className={`${box} -mt-px h-[25px] w-[101px] pl-[5px]`}><span className="pt-[3px] tracking-[0.3px]">0.0 °</span><Spin /></div>
      <span className="ml-[7px] flex"><Check on /></span>
      <span className="ml-[6px] w-[62px] shrink-0 pt-px">Render</span>
      <svg viewBox="0 0 20 20" className="size-5 shrink-0" fill="none" stroke="#666" strokeWidth="1.100"><circle cx="10" cy="10" r="8" /><ellipse cx="10" cy="10" rx="4" ry="8" /><path d="M0 7.500h20M1 12h18M10 2v16M0 7.500L4 3h12l4 4.500" /></svg>
      <span className="ml-[2px] pt-[2px] tracking-[0.32px]">EPSG:4326</span>
      <svg viewBox="0 0 20 20" className="mr-[9px] ml-auto size-5 shrink-0"><path d="M5 1h10a4.500 4.500 0 0 1 5 5v4a5 5 0 0 1-3 4.500l2 4.500-6-4H5a5 5 0 0 1-5-5V6a5 5 0 0 1 5-5z" fill="#555" /><g fill="#eee"><circle cx="5.500" cy="8" r="1.300" /><circle cx="10" cy="8" r="1.300" /><circle cx="14.500" cy="8" r="1.300" /></g></svg>
    </div>
  );
}

/* ---------- taskbar ---------- */

function App30({ children, running = false }: { children: React.ReactNode; running?: boolean }) {
  return (
    <span className="relative flex size-[30px] shrink-0">
      <svg viewBox="0 0 30 30" className="size-[30px]" fill="none">{children}</svg>
      {running && <span className="absolute top-[35px] left-[11px] h-1 w-2 rounded-full bg-[#9a9fa1]" />}
    </span>
  );
}

const Tile = ({ letter, fill }: { letter: string; fill: string }) => (
  <>
    <rect x="0" y="7" width="16" height="16" rx="1.500" fill={fill} />
    <text x="8" y="19.200" textAnchor="middle" fontFamily="Open Sans" fontWeight="700" fontSize="11.500" fill="#fff">{letter}</text>
  </>
);

function Taskbar() {
  return (
    <footer className="flex h-[60px] items-center border-t border-[#3a4749] bg-[linear-gradient(90deg,#1b2433_0px,#172a31_150px,#182e2b_270px,#1f2a24_350px,#1f2a25_500px,#1a2c29_620px,#16282f_760px,#182530_940px,#1a2b25_1180px,#192b25_1300px,#183029_1420px,#162a30_1560px,#192731_1760px,#211f2c_1920px)] pb-[2px] text-white">
      <svg viewBox="0 0 30 30" className="ml-[27px] size-[30px] shrink-0">
        <defs><linearGradient id="moon" x1="0" y1="0" x2="0" y2="1"><stop stopColor="#b4bcc6" /><stop offset="1" stopColor="#7b838d" /></linearGradient></defs>
        <circle cx="14" cy="15" r="13" fill="url(#moon)" />
        <path d="M16 24a4 4 0 0 1 0-7.500 5 5 0 0 1 9 1.500 3 3 0 0 1 0 6z" fill="#eef1f4" />
      </svg>
      <svg viewBox="0 0 29 29" className="ml-[473px] size-[29px] shrink-0">
        <defs><linearGradient id="win" x1="0" y1="0" x2="1" y2="1"><stop stopColor="#7fdcff" /><stop offset="1" stopColor="#0f94fb" /></linearGradient></defs>
        <path d="M0 1q0-1 1-1h13v14H0zM15 0h13q1 0 1 1v13H15zM0 15h14v14H1q-1 0-1-1zM15 15h14v13q0 1-1 1H15z" fill="url(#win)" />
      </svg>
      <div className="ml-[18px] flex h-[38px] w-[273px] shrink-0 items-center rounded-full bg-[#f2f3f4] pl-[14px] text-[16px] text-[#5c5c5c]">
        <svg viewBox="0 0 18 18" className="size-[18px]" fill="none"><circle cx="8" cy="7.500" r="6.500" stroke="#222" strokeWidth="1.600" /><path d="M12.500 12.500l4.500 4.500" stroke="#222" strokeWidth="2.200" strokeLinecap="round" /></svg>
        <span className="ml-[13px] pt-[2px] tracking-[0.3px]">Search</span>
      </div>
      <div className="ml-[16px] flex gap-[25px]">
        <App30>
          <rect x="0" y="9" width="23" height="20" rx="1.500" fill="#6a6a6a" /><rect x="7.500" y="1.500" width="22.500" height="20" rx="1.500" fill="#f6f6f6" /><path d="M7.500 9H23v12.500H7.500z" fill="#b5b5b5" />
        </App30>
        <App30>
          <path d="M12 1h6l1 4 2.500 1.500L25.500 5l3 5-3 3v4l3 3-3 5-4-1.500L19 25l-1 4h-6l-1-4-2.500-1.500L4.500 25l-3-5 3-3v-4l-3-3 3-5 4 1.500L11 5z" fill="#848c95" />
          <circle cx="15" cy="15" r="7" fill="#f4f4f4" /><circle cx="15" cy="15" r="5.200" fill="#0d5cb4" />
        </App30>
        <App30>
          <path d="M5 9L18 1l12 8v17q0 2-2 2H9z" fill="#1566c0" /><path d="M11 5.500L18 1l12 8-14 8z" fill="#36a3ea" /><path d="M9 28L30 10v16q0 2-2 2z" fill="#3bc6f5" /><path d="M16 17l14-8v4L13 24z" fill="#0a4fa3" />
          <Tile letter="O" fill="#0f6cd0" />
        </App30>
        <App30 running>
          <path d="M0 3.500Q0 2 1.500 2h8l3 3.500H28.500q1.500 0 1.500 1.500V28H0z" fill="#e3a11a" /><path d="M0 8h30v18.500q0 1.500-1.500 1.500h-27Q0 28 0 26.500z" fill="#fdd158" /><path d="M5 28v-5q0-2 2-2h16q2 0 2 2v5z" fill="#1270c0" /><path d="M9 24.500h12" stroke="#0b4a86" strokeWidth="1.500" />
        </App30>
        <App30 running>
          <circle cx="15" cy="15" r="14.500" fill="#fff" />
          <path d="M15 .5a14.500 14.500 0 0 1 12.600 7.300H15a7.200 7.200 0 0 0-6.400 4L2.400 7.800A14.500 14.500 0 0 1 15 .5z" fill="#e33b2e" />
          <path d="M2.400 7.800l6.300 10.800a7.200 7.200 0 0 0 7.500 3.500L13 29.400A14.500 14.500 0 0 1 2.400 7.800z" fill="#2da94f" />
          <path d="M27.600 7.800A14.500 14.500 0 0 1 13 29.400l8.300-11a7.200 7.200 0 0 0-1-10.600z" fill="#fdd01c" />
          <circle cx="15" cy="15" r="7.200" fill="#fff" /><circle cx="15" cy="15" r="5.600" fill="#3b7ded" />
        </App30>
        <App30>
          <circle cx="15" cy="15" r="14.500" fill="#1ed760" />
          <path d="M6 10.500c6-1.800 13-1.200 18.500 1.800M7 15.500c5-1.500 11-1 15.500 1.700M8 20.200c4-1.200 9-.8 12.500 1.400" stroke="#12271b" strokeWidth="2.300" strokeLinecap="round" />
        </App30>
        <App30>
          <circle cx="16" cy="5" r="4.300" fill="#6b72dc" /><circle cx="25" cy="6.500" r="3" fill="#4c50b8" />
          <path d="M10 11h19v10a7 7 0 0 1-7 7h-5a8 8 0 0 1-7-7z" fill="#5f65cc" />
          <circle cx="22.500" cy="21" r="7.500" fill="#b9c5cd" /><path d="M18.500 26c-1-5 0-9.500 4-9.500s4.500 4.500 4 9.500z" fill="#5a372d" /><circle cx="22.500" cy="20" r="2.300" fill="#d9a48b" /><path d="M18 26.500q4.500-5 9 0-4 3-9 0z" fill="#c34a4a" />
          <Tile letter="T" fill="#484eb3" />
        </App30>
        <App30 running>
          <path d="M7 1h21.500q1 0 1 1v6H7z" fill="#41a5ee" /><path d="M7 8h22.500v7H7z" fill="#2b7cd3" /><path d="M7 15h22.500v7H7z" fill="#185abd" /><path d="M7 22h22.500v5q0 1-1 1H7z" fill="#103f91" />
          <Tile letter="W" fill="#1a56b8" />
        </App30>
        <App30 running>
          <circle cx="16" cy="14.500" r="13.500" fill="#ed6c47" /><path d="M16 1a13.500 13.500 0 0 1 13.500 13.500H16z" fill="#ff9d7c" /><path d="M2.500 14.500h27a13.500 13.500 0 0 1-27 0z" fill="#d35230" />
          <Tile letter="P" fill="#c2402a" />
        </App30>
      </div>
      <div className="relative ml-[15px] flex size-[50px] shrink-0 items-center justify-center rounded-[5px] border border-white/5 bg-white/8">
        <QgisMark className="size-[30px]" />
        <span className="absolute top-[44px] left-[14px] h-1 w-5 rounded-full bg-[#45b4f2]" />
      </div>
      <div className="ml-[163px] flex flex-1 items-center">
        <svg viewBox="0 0 14 10" className="h-[10px] w-[14px]"><path d="M1 8.500l6-6.500 6 6.500" stroke="#fff" strokeWidth="1.800" fill="none" /></svg>
        <svg viewBox="0 0 22 18" className="ml-[22px] h-[18px] w-[22px]" fill="none"><path d="M5 16a4.500 4.500 0 0 1-1-8.800A6 6 0 0 1 15 6a5 5 0 0 1 3 10z" fill="#7f898c" /><path d="M3 1l17 16" stroke="#17272f" strokeWidth="3" /><path d="M4 1l16 15.500" stroke="#fff" strokeWidth="1.300" /></svg>
        <span className="ml-[23px] w-[30px] pt-px text-[14px] tracking-[-0.1px]">POR</span>
        <svg viewBox="0 0 20 16" className="ml-[21px] h-4 w-5" fill="none" stroke="#fff" strokeWidth="1.600"><path d="M.8 6A13 13 0 0 1 19.200 6M3.800 9a9 9 0 0 1 12.400 0M6.700 11.800a5 5 0 0 1 6.600 0" /><circle cx="10" cy="14" r="1" fill="#fff" /></svg>
        <svg viewBox="0 0 20 14" className="ml-[10px] h-[14px] w-5" fill="none" stroke="#fff" strokeWidth="1.300"><path d="M1 4.500h3l4-3.500v12L4 9.500H1zM12 4l6 6M18 4l-6 6" /></svg>
        <svg viewBox="0 0 20 14" className="ml-[10px] h-[14px] w-5" fill="none"><rect x=".8" y="1.300" width="15.500" height="11.400" rx="2.500" stroke="#fff" strokeWidth="1.400" /><rect x="3" y="3.500" width="8.500" height="7" rx="1" fill="#fff" /><path d="M18.300 5v4" stroke="#fff" strokeWidth="2" strokeLinecap="round" /></svg>
        <span className="ml-auto text-right text-[14px] leading-5"><span className="tracking-[0.15px]">3:54 PM</span><br /><span className="tracking-[0.25px]">5/28/2025</span></span>
        <svg viewBox="0 0 18 20" className="mr-[26px] ml-[10px] h-5 w-[18px]"><path d="M1 15.500l1.500-2V8a6.500 6.500 0 0 1 6-6.500h2V9h5v4.500l1.500 2zM6 17h6q-.5 2.500-3 2.500T6 17z" fill="#fff" /><path d="M6 6.500h4.500L6 11.500h5" stroke="#1a2632" strokeWidth="1.500" fill="none" /><path d="M12.500 1.500H17l-4.500 5H17" stroke="#fff" strokeWidth="1.400" fill="none" /></svg>
      </div>
    </footer>
  );
}

export default function App() {
  return (
    <div className="flex h-[1080px] w-[1920px] flex-col overflow-hidden bg-[#efefef] font-['Open_Sans',sans-serif] text-black">
      <TitleBar />
      <MenuBar />
      <TopToolbar />
      <EditToolbar />
      <main className="flex h-[833px] shrink-0">
        <aside className="flex w-[386px] shrink-0 flex-col">
          <BrowserDock />
          <div className="mt-[2px] ml-[184px] h-[4px] w-[22px] shrink-0 bg-[radial-gradient(circle,#c6c6c6_0.6px,transparent_1px)] bg-[length:4px_4px]" />
          <div className="flex min-h-0 flex-1 flex-col pt-[1px]"><LayersDock /></div>
        </aside>
        <div className="mt-[407px] h-[22px] w-[8px] shrink-0 bg-[radial-gradient(circle,#c6c6c6_0.6px,transparent_1px)] bg-[length:4px_4px]" />
        <div className="flex flex-col border-b border-[#b4b4b4] pt-px">
          <MessageBar />
          <MapCanvas />
        </div>
      </main>
      <StatusBar />
      <Taskbar />
    </div>
  );
}
